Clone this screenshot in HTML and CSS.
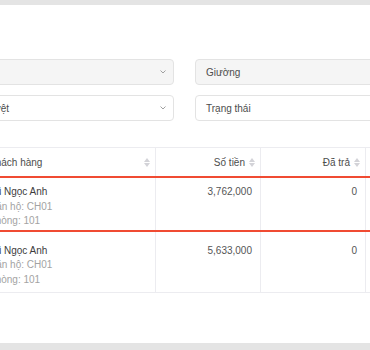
FILE: index.html
```html
<!DOCTYPE html>
<html lang="vi">
<head>
    <meta charset="UTF-8">
    <meta name="viewport" content="width=device-width, initial-scale=1.0">
    <title>Hóa đơn</title>
    <link rel="stylesheet" href="styles.css">
</head>
<body>
<div class="page">
    <div class="card">
        <div class="filters">
            <div class="select is-disabled"><span>Tòa nhà</span><svg class="chevron" viewBox="0 0 6 4"><path d="M0.5 0.5 L3 3 L5.5 0.5"/></svg></div>
            <div class="select is-disabled"><span>Tầng</span><svg class="chevron" viewBox="0 0 6 4"><path d="M0.5 0.5 L3 3 L5.5 0.5"/></svg></div>
            <div class="select is-disabled"><span>Giường</span><svg class="chevron" viewBox="0 0 6 4"><path d="M0.5 0.5 L3 3 L5.5 0.5"/></svg></div>
            <div class="select"><span>Khu vực</span><svg class="chevron" viewBox="0 0 6 4"><path d="M0.5 0.5 L3 3 L5.5 0.5"/></svg></div>
            <div class="select"><span>Đã duyệt</span><svg class="chevron" viewBox="0 0 6 4"><path d="M0.5 0.5 L3 3 L5.5 0.5"/></svg></div>
            <div class="select"><span>Trạng thái</span><svg class="chevron" viewBox="0 0 6 4"><path d="M0.5 0.5 L3 3 L5.5 0.5"/></svg></div>
        </div>

        <table class="table">
            <colgroup>
                <col class="col-code">
                <col class="col-customer">
                <col class="col-money">
                <col class="col-money">
                <col>
            </colgroup>
            <thead>
            <tr>
                <th>Mã hóa đơn</th>
                <th><div class="th-inner"><span>Khách hàng</span><span class="sort"></span></div></th>
                <th class="num"><div class="th-inner"><span>Số tiền</span><span class="sort"></span></div></th>
                <th class="num"><div class="th-inner"><span>Đã trả</span><span class="sort"></span></div></th>
                <th class="num"><div class="th-inner"><span>Còn nợ</span><span class="sort"></span></div></th>
            </tr>
            </thead>
            <tbody>
            <tr class="is-active">
                <td>HD0001</td>
                <td>
                    <div class="name">Vũ Ngọc Anh</div>
                    <div class="sub">Căn hộ: CH01</div>
                    <div class="sub">Phòng: 101</div>
                </td>
                <td class="num">3,762,000</td>
                <td class="num">0</td>
                <td class="num">3,762,000</td>
            </tr>
            <tr>
                <td>HD0002</td>
                <td>
                    <div class="name">Vũ Ngọc Anh</div>
                    <div class="sub">Căn hộ: CH01</div>
                    <div class="sub">Phòng: 101</div>
                </td>
                <td class="num">5,633,000</td>
                <td class="num">0</td>
                <td class="num">5,633,000</td>
            </tr>
            </tbody>
        </table>
    </div>
</div>
</body>
</html>
```

FILE: styles.css
```css
html, body {
    margin: 0;
    padding: 0;
    height: 350px;
    overflow: hidden;
    background: #e4e4e4;
    font-family: "Liberation Sans", Arial, sans-serif;
    font-size: 10px;
    color: #555;
}
.page {
    padding-top: 5px;
    margin-left: -299px;
    width: 1000px;
}
.card {
    background: #fff;
    height: 338px;
    box-sizing: border-box;
    padding: 54px 20px 0;
}
.filters {
    display: grid;
    grid-template-columns: repeat(3, 216px);
    column-gap: 21px;
    row-gap: 10px;
}
.select {
    height: 26px;
    box-sizing: border-box;
    border: 1px solid #e3e3e3;
    border-radius: 4px;
    background: #fff;
    padding: 0 7px 0 10px;
    display: flex;
    align-items: center;
    justify-content: space-between;
    color: #4d4d4d;
}
.select.is-disabled {
    background: #f5f5f5;
}
.chevron {
    width: 6px;
    height: 4px;
    fill: none;
    stroke: #a0a0a0;
    stroke-width: 1;
}
.table {
    margin-top: 26px;
    border-collapse: collapse;
    table-layout: fixed;
    width: 960px;
}
.col-code { width: 257px; }
.col-customer { width: 177px; }
.col-money { width: 105px; }
.table th {
    height: 28px;
    padding: 0 5px 0 10px;
    border: 1px solid #ececf0;
    font-weight: normal;
    text-align: left;
    color: #4d4d4d;
}
.th-inner {
    display: flex;
    align-items: center;
    justify-content: space-between;
    gap: 4px;
}
.table th.num .th-inner {
    justify-content: flex-end;
}
.sort {
    position: relative;
    width: 6px;
    height: 9px;
}
.sort::before, .sort::after {
    content: "";
    position: absolute;
    left: 0;
    border-left: 3px solid transparent;
    border-right: 3px solid transparent;
}
.sort::before {
    top: 0;
    border-bottom: 4px solid #d3d3d8;
}
.sort::after {
    bottom: 0;
    border-top: 4px solid #d3d3d8;
}
.table td {
    border: 1px solid #ececf0;
    padding: 12px 10px 5px;
    vertical-align: top;
    line-height: 14.5px;
}
.table td.num {
    text-align: right;
    padding-right: 8px;
    color: #555;
}
.table tr.is-active td {
    border-top: 2px solid #f04b32;
    border-bottom: 2px solid #f04b32;
    padding-top: 7px;
    padding-bottom: 1px;
}
.name {
    color: #3d3d3d;
}
.sub {
    color: #a3a3a3;
}
```
